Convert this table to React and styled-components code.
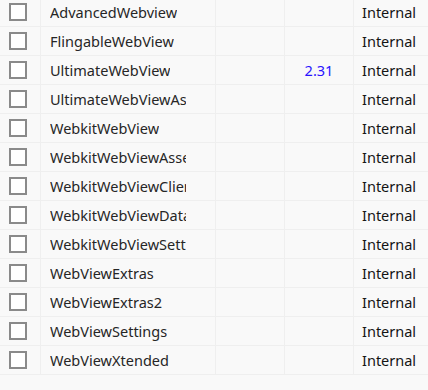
import React from "react";
import styled, { createGlobalStyle } from "styled-components";

const Global = createGlobalStyle`
  html, body { margin: 0; padding: 0; background: #f9f9f9; }
  body { font-family: "Noto Sans", "Open Sans", sans-serif; }
`;

const Table = styled.div`
  width: 428px;
  height: 390px;
  overflow: hidden;
  background: #f9f9f9;
`;

const Body = styled.div`
  margin-top: -2px;
  display: flex;
  flex-direction: column;
`;

const Row = styled.div`
  display: grid;
  grid-template-columns: 41px 175px 69px 69px 1fr;
  height: 29px;
  box-sizing: border-box;
  border-bottom: 1px solid #efefef;
`;

const Cell = styled.div`
  display: flex;
  align-items: center;
  justify-content: ${(p) => p.$align || "flex-start"};
  padding: 0 ${(p) => p.$pad ?? 0}px;
  border-right: ${(p) => (p.$last ? "none" : "1px solid #efefef")};
  overflow: hidden;
  white-space: nowrap;
  font-size: 14.5px;
  color: ${(p) => p.$color || "#262626"};
`;

const Name = styled.span`
  display: block;
  max-width: 136px;
  overflow: hidden;
  white-space: nowrap;
`;

const Box = styled.span`
  width: 18px;
  height: 18px;
  box-sizing: border-box;
  border: 2px solid #8a8a8a;
  background: #fff;
  margin-left: 9px;
`;

const rows = [
  ["AdvancedWebview", ""],
  ["FlingableWebView", ""],
  ["UltimateWebView", "2.31"],
  ["UltimateWebViewAssets", ""],
  ["WebkitWebView", ""],
  ["WebkitWebViewAssets", ""],
  ["WebkitWebViewClient", ""],
  ["WebkitWebViewData", ""],
  ["WebkitWebViewSettings", ""],
  ["WebViewExtras", ""],
  ["WebViewExtras2", ""],
  ["WebViewSettings", ""],
  ["WebViewXtended", ""],
];

export default function App() {
  return (
    <Table>
      <Global />
      <Body>
        {rows.map(([name, ver]) => (
          <Row key={name}>
            <Cell>
              <Box />
            </Cell>
            <Cell $pad={9}>
              <Name>{name}</Name>
            </Cell>
            <Cell />
            <Cell $align="center" $color="#2a14ff">{ver}</Cell>
            <Cell $pad={8} $last $color="#141414">Internal</Cell>
          </Row>
        ))}
      </Body>
    </Table>
  );
}
